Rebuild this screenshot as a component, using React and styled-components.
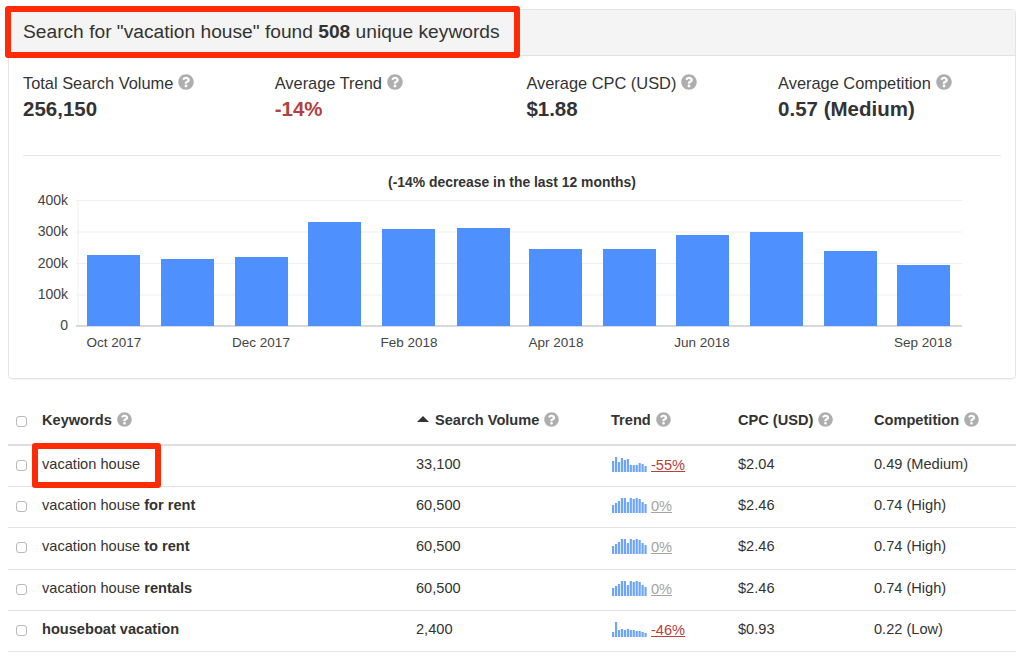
import React from 'react'
import styled, { createGlobalStyle } from 'styled-components'
import { FaQuestionCircle } from 'react-icons/fa'

const GlobalStyle = createGlobalStyle`
    html, body {
        margin: 0;
        background: #fff;
        color: #333;
        font-family: "Liberation Sans", Arial, sans-serif;
        -webkit-font-smoothing: antialiased;
    }
`

const Page = styled.div`
    position: relative;
    width: 1024px;
    height: 662px;
    padding: 9px 8px 0;
    box-sizing: border-box;
    overflow: hidden;
`

const Callout = styled.div`
    position: absolute;
    left: ${props => props.x}px;
    top: ${props => props.y}px;
    width: ${props => props.w}px;
    height: ${props => props.h}px;
    box-sizing: border-box;
    border: 6px solid #ff2a06;
    border-radius: 3px;
`

const Panel = styled.section`
    height: 370px;
    box-sizing: border-box;
    border: 1px solid #e4e4e4;
    border-radius: 4px;
    box-shadow: 0 1px 1px rgba(0, 0, 0, 0.05);
`

const PanelHeader = styled.header`
    height: 46px;
    box-sizing: border-box;
    padding: 10px 14px 0;
    background: #f4f4f4;
    border-bottom: 1px solid #e2e2e2;
    border-radius: 3px 3px 0 0;
    font-size: 19.2px;
    line-height: 24px;
`

const Stats = styled.div`
    display: grid;
    grid-template-columns: repeat(4, 251.7px);
    margin: 0 14px;
    padding-top: 18px;
    height: 100px;
    box-sizing: border-box;
    border-bottom: 1px solid #e6e6e6;
`

const StatLabel = styled.div`
    display: flex;
    align-items: center;
    gap: 5px;
    font-size: 16.4px;
    line-height: 18px;
`

const StatValue = styled.div`
    margin-top: 5px;
    font-size: 20.5px;
    line-height: 24px;
    font-weight: bold;
    color: ${props => props.$color || '#333'};
`

const Help = styled(FaQuestionCircle)`
    flex: none;
    width: ${props => props.$size || 16}px;
    height: ${props => props.$size || 16}px;
    margin-top: -2px;
    color: #aeaeae;
`

const ChartSvg = styled.svg`
    display: block;
    margin-top: 16px;
    font-family: "Liberation Sans", Arial, sans-serif;
`

const Table = styled.div`
    margin-top: 22px;
`

const Row = styled.div`
    display: grid;
    grid-template-columns: 34px 374px 195px 127px 136px 1fr;
    align-items: center;
    box-sizing: border-box;
    height: ${props => props.$head ? '45px' : '41.2px'};
    padding-bottom: ${props => props.$head ? '5px' : '4px'};
    border-bottom: ${props => props.$head ? '2px solid #dedede' : '1px solid #e2e2e2'};
    font-size: 14.6px;
`

const Check = styled.input.attrs({ type: 'checkbox' })`
    appearance: none;
    display: block;
    margin: 3px 0 0 8px;
    width: 11px;
    height: 11px;
    background: #fff;
    border: 1px solid #b9b9b9;
    border-radius: 3px;
`

const HeadCell = styled.div`
    display: flex;
    align-items: center;
    gap: 5px;
    font-weight: bold;
`

const SortArrow = styled.span`
    width: 0;
    height: 0;
    margin: 0 1px 2px 1px;
    border-left: 6px solid transparent;
    border-right: 6px solid transparent;
    border-bottom: 6px solid #333;
`

const TrendCell = styled.div`
    display: flex;
    align-items: center;
    gap: 4px;
    padding-left: 1px;
`

const TrendLink = styled.a`
    margin-top: 2px;
    color: ${props => props.$down ? '#b5403e' : '#a3a3a3'};
    text-decoration: underline;
`

const columns = ['Trend', 'CPC (USD)', 'Competition']

const stats = [
    { label: 'Total Search Volume', value: '256,150' },
    { label: 'Average Trend', value: '-14%', color: '#b5403e' },
    { label: 'Average CPC (USD)', value: '$1.88' },
    { label: 'Average Competition', value: '0.57 (Medium)' },
]

// coordinates below are page pixels, the viewBox lines them up
const bars = [
    { x: 87, top: 255 }, { x: 161, top: 259 }, { x: 235, top: 257 }, { x: 308, top: 222 },
    { x: 382, top: 229 }, { x: 457, top: 228 }, { x: 529, top: 249 }, { x: 603, top: 249 },
    { x: 676, top: 235 }, { x: 750, top: 232 }, { x: 824, top: 251 }, { x: 897, top: 265 },
]
const yTicks = [['400k', 200.5], ['300k', 232], ['200k', 263.5], ['100k', 295], ['0', 326]]
const xTicks = [['Oct 2017', 114], ['Dec 2017', 261], ['Feb 2018', 409], ['Apr 2018', 556], ['Jun 2018', 702], ['Sep 2018', 923]]

const flat = [8, 10, 12, 15, 15, 11, 15, 14, 15, 14, 11, 9]
const keywords = [
    { plain: 'vacation house', volume: '33,100', spark: [11, 15, 10, 14, 12, 13, 7, 7, 7, 9, 8, 6], trend: '-55%', cpc: '$2.04', comp: '0.49 (Medium)' },
    { plain: 'vacation house ', bold: 'for rent', volume: '60,500', spark: flat, trend: '0%', cpc: '$2.46', comp: '0.74 (High)' },
    { plain: 'vacation house ', bold: 'to rent', volume: '60,500', spark: flat, trend: '0%', cpc: '$2.46', comp: '0.74 (High)' },
    { plain: 'vacation house ', bold: 'rentals', volume: '60,500', spark: flat, trend: '0%', cpc: '$2.46', comp: '0.74 (High)' },
    { bold: 'houseboat vacation', volume: '2,400', spark: [5, 15, 7, 8, 7, 8, 7, 7, 6, 6, 5, 4], trend: '-46%', cpc: '$0.93', comp: '0.22 (Low)' },
]

const VolumeChart = () => (
    <ChartSvg width="1006" height="206" viewBox="9 172 1006 206">
        <text x="512" y="187" fontSize="13.9" fontWeight="bold" fill="#333" textAnchor="middle">(-14% decrease in the last 12 months)</text>
        <line x1="78" y1="200" x2="78" y2="326" stroke="#eee" />
        {yTicks.map(([label, y]) => (
            <g key={label}>
                <line x1="76" x2="962" y1={y} y2={y} stroke={label === '0' ? '#ccc' : '#efefef'} strokeWidth={label === '0' ? 1.5 : 1} />
                <text x="68" y={y + 4} fontSize="14" fill="#444" textAnchor="end">{label}</text>
            </g>
        ))}
        {bars.map(bar => (
            <rect key={bar.x} x={bar.x} y={bar.top} width="53" height={326 - bar.top} fill="#4e90fe" />
        ))}
        {xTicks.map(([label, x]) => (
            <text key={label} x={x} y="347" fontSize="13.5" fill="#444" textAnchor="middle">{label}</text>
        ))}
    </ChartSvg>
)

const Spark = ({ values }) => (
    <svg width="35" height="16" viewBox="0 0 35 16">
        {values.map((h, i) => (
            <rect key={i} x={i * 2.95} y={16 - h} width="2.2" height={h} fill="#6ea5fb" />
        ))}
    </svg>
)

const App = () => {
    return (
        <Page>
            <GlobalStyle />
            <Panel>
                <PanelHeader>Search for "vacation house" found <b>508</b> unique keywords</PanelHeader>
                <Stats>
                    {stats.map(stat => (
                        <div key={stat.label}>
                            <StatLabel>{stat.label} <Help /></StatLabel>
                            <StatValue $color={stat.color}>{stat.value}</StatValue>
                        </div>
                    ))}
                </Stats>
                <VolumeChart />
            </Panel>
            <Table>
                <Row $head>
                    <Check />
                    <HeadCell>Keywords <Help $size={15} /></HeadCell>
                    <HeadCell><SortArrow />Search Volume <Help $size={15} /></HeadCell>
                    {columns.map(col => (
                        <HeadCell key={col}>{col} <Help $size={15} /></HeadCell>
                    ))}
                </Row>
                {keywords.map(kw => (
                    <Row key={kw.plain + kw.bold}>
                        <Check />
                        <div>{kw.plain}{kw.bold && <b>{kw.bold}</b>}</div>
                        <div>{kw.volume}</div>
                        <TrendCell>
                            <Spark values={kw.spark} />
                            <TrendLink $down={kw.trend !== '0%'}>{kw.trend}</TrendLink>
                        </TrendCell>
                        <div>{kw.cpc}</div>
                        <div>{kw.comp}</div>
                    </Row>
                ))}
            </Table>
            <Callout x={5} y={6} w={515} h={52} />
            <Callout x={32} y={443} w={129} h={45} />
        </Page>
    )
}

export default App
